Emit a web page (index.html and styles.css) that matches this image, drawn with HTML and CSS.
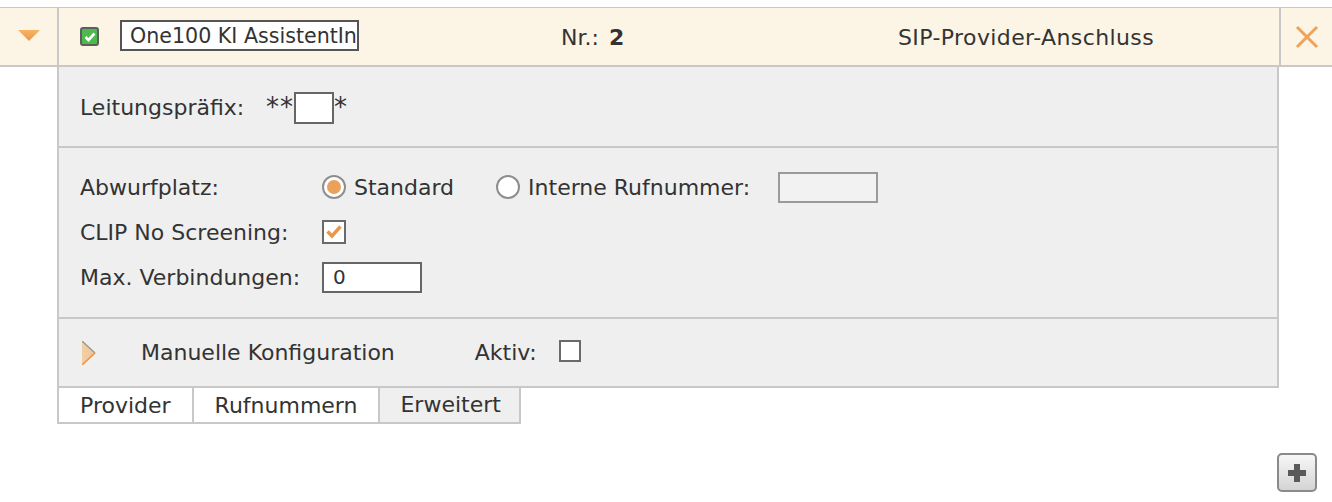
FILE: index.html
```html
<!DOCTYPE html>
<html lang="de">
<head>
    <meta charset="UTF-8">
    <title>SIP-Provider-Anschluss</title>
    <link rel="stylesheet" href="styles.css">
</head>
<body>

<div class="entry">
    <div class="entry-head">
        <div class="cell-toggle">
            <svg width="22" height="11" viewBox="0 0 22 11">
                <defs>
                    <linearGradient id="tri" x1="0" y1="0" x2="0" y2="1">
                        <stop offset="0" stop-color="#f7b563"/>
                        <stop offset="1" stop-color="#e9974c"/>
                    </linearGradient>
                </defs>
                <polygon points="0,0 22,0 11,11" fill="url(#tri)"/>
            </svg>
        </div>
        <div class="cell-main">
            <span class="check-green">
                <svg width="12" height="10" viewBox="0 0 12 10"><path d="M1.5 5 L4.5 8 L10.5 1.5" fill="none" stroke="#fff" stroke-width="2.6"/></svg>
            </span>
            <input class="name-input" type="text" value="One100 KI AssistentIn">
            <span class="nr">Nr.: <b>2</b></span>
            <span class="type">SIP-Provider-Anschluss</span>
        </div>
        <div class="cell-close">
            <svg width="24" height="24" viewBox="0 0 24 24"><path d="M2 2 L22 22 M22 2 L2 22" stroke="#f0a258" stroke-width="3"/></svg>
        </div>
    </div>

    <div class="panel">
        <div class="section section-prefix">
            <span class="label">Leitungspräfix:</span>
            <span class="prefix"><span class="stars">**</span><input class="box small" type="text"><span class="stars">*</span></span>
        </div>

        <div class="section section-options">
            <div class="row">
                <span class="label wide">Abwurfplatz:</span>
                <label class="radio first"><span class="dot on"></span>Standard</label>
                <label class="radio second"><span class="dot"></span>Interne Rufnummer:</label>
                <input class="box number disabled" type="text">
            </div>
            <div class="row">
                <span class="label wide">CLIP No Screening:</span>
                <span class="check-orange">
                    <svg width="16" height="14" viewBox="0 0 16 14"><path d="M1.5 6.5 L6 11 L14.5 1.5" fill="none" stroke="#e9974c" stroke-width="3.4"/></svg>
                </span>
            </div>
            <div class="row">
                <span class="label wide">Max. Verbindungen:</span>
                <input class="box number" type="text" value="0">
            </div>
        </div>

        <div class="section section-manual">
            <svg class="arrow-right" width="14" height="24" viewBox="0 0 14 24">
                <defs>
                    <linearGradient id="tri2" x1="0" y1="0" x2="1" y2="0">
                        <stop offset="0" stop-color="#f2cfa6"/>
                        <stop offset="1" stop-color="#eec49a"/>
                    </linearGradient>
                </defs>
                <polygon points="0,0 13,12 0,24" fill="url(#tri2)"/>
                <path d="M0 0 L13 12" stroke="#999" stroke-width="1.4"/>
                <path d="M13 12 L0 24" stroke="#f0933e" stroke-width="1.6"/>
            </svg>
            <span class="manual-label">Manuelle Konfiguration</span>
            <span class="aktiv">Aktiv:</span>
            <span class="check-empty"></span>
        </div>
    </div>

    <div class="tabs">
        <div class="tab">Provider</div>
        <div class="tab">Rufnummern</div>
        <div class="tab active">Erweitert</div>
    </div>
</div>

<div class="actions">
    <button class="add-btn">
        <svg width="20" height="20" viewBox="0 0 20 20"><path d="M7 1 H13 V7 H19 V13 H13 V19 H7 V13 H1 V7 H7 Z" fill="#5a5a5a"/></svg>
    </button>
</div>

</body>
</html>
```

FILE: styles.css
```css
body {
    margin: 0;
    font-family: "DejaVu Sans", Verdana, sans-serif;
    font-size: 22px;
    color: #333;
    background-color: #fff;
}
.entry {
    padding-top: 7px;
}
.entry-head {
    display: flex;
    height: 57px;
    background-color: #fcf5e6;
    border-top: 1px solid #c8c8c8;
    border-bottom: 2px solid #c8c8c8;
}
.cell-toggle {
    width: 57px;
    display: flex;
    align-items: center;
    justify-content: center;
    border-right: 2px solid #c8c8c8;
    padding-bottom: 2px;
}
.cell-main {
    width: 1220px;
    display: flex;
    align-items: center;
    padding-left: 21px;
    padding-top: 2px;
    box-sizing: border-box;
}
.check-green {
    width: 15px;
    height: 15px;
    background-color: #4cba4c;
    border: 2px solid #5e5e5e;
    border-radius: 3px;
    display: flex;
    align-items: center;
    justify-content: center;
    margin-right: 21px;
    margin-bottom: 2px;
}
.name-input {
    width: 239px;
    height: 31px;
    box-sizing: border-box;
    border: 2px solid #555;
    padding: 0 0 0 8px;
    margin-bottom: 4px;
    font-family: inherit;
    font-size: 20.6px;
    color: #333;
    background-color: #fff;
}
.nr {
    margin-left: 202px;
    width: 337px;
}
.nr b {
    margin-left: 3px;
}
.type {
    letter-spacing: 0.4px;
}
.cell-close {
    width: 51px;
    border-left: 2px solid #c8c8c8;
    display: flex;
    align-items: center;
    justify-content: center;
}
.panel {
    margin-left: 57px;
    width: 1222px;
    box-sizing: border-box;
    background-color: #efefef;
    border-left: 2px solid #c8c8c8;
    border-right: 2px solid #c8c8c8;
    border-bottom: 2px solid #c8c8c8;
}
.section {
    padding-left: 21px;
    border-bottom: 2px solid #c8c8c8;
}
.section:last-child {
    border-bottom: none;
}
.section-prefix {
    height: 81px;
    display: flex;
    align-items: center;
    padding-top: 2px;
    box-sizing: border-box;
}
.section-prefix .label {
    width: 186px;
}
.prefix {
    display: flex;
    align-items: center;
}
.stars {
    font-size: 26px;
    letter-spacing: 1px;
    margin-bottom: 2px;
}
.box {
    box-sizing: border-box;
    background-color: #fff;
    border: 2px solid #666;
    font-family: inherit;
    font-size: 20px;
    color: #333;
    padding: 0 9px;
}
.box.small {
    width: 40px;
    height: 32px;
}
.box.number {
    width: 100px;
    height: 31px;
}
.box.disabled {
    background-color: #f2f2f2;
    border-color: #9a9a9a;
}
.section-options {
    height: 171px;
    padding-top: 23px;
    box-sizing: border-box;
}
.row {
    display: flex;
    align-items: center;
    height: 32px;
    margin-bottom: 13px;
}
.label.wide {
    width: 242px;
}
.radio {
    display: flex;
    align-items: center;
}
.radio.first {
    margin-right: 42px;
}
.radio.second {
    margin-right: 28px;
}
.dot {
    width: 20px;
    height: 20px;
    border: 2px solid #8e8e8e;
    border-radius: 50%;
    background-color: #fff;
    margin-right: 8px;
    position: relative;
}
.dot.on::after {
    content: "";
    position: absolute;
    left: 3px;
    top: 3px;
    width: 14px;
    height: 14px;
    border-radius: 50%;
    background-color: #eba15b;
}
.check-orange {
    width: 20px;
    height: 20px;
    border: 2px solid #6a6a6a;
    background-color: #fff;
    display: flex;
    align-items: center;
    justify-content: center;
}
.section-manual {
    height: 67px;
    display: flex;
    align-items: center;
    padding-left: 23px;
}
.arrow-right {
    margin-right: 45px;
}
.manual-label {
    margin-right: 80px;
}
.aktiv {
    margin-right: 22px;
}
.check-empty {
    width: 18px;
    height: 18px;
    border: 2px solid #6a6a6a;
    background-color: #fff;
    margin-bottom: 4px;
}
.tabs {
    display: flex;
    margin-left: 57px;
}
.tab {
    height: 36px;
    box-sizing: border-box;
    padding: 0 21px;
    display: flex;
    align-items: center;
    background-color: #fff;
    border: 2px solid #c8c8c8;
    border-top: none;
    border-right: none;
}
.tab:last-child {
    border-right: 2px solid #c8c8c8;
    padding: 0 18px 1px 20px;
}
.tab.active {
    background-color: #efefef;
}
.actions {
    display: flex;
    justify-content: flex-end;
    padding-right: 15px;
    padding-top: 29px;
}
.add-btn {
    width: 40px;
    height: 39px;
    border: 2px solid #8a8a8a;
    border-radius: 5px;
    background: linear-gradient(#f7f7f7, #d4d4d4);
    display: flex;
    align-items: center;
    justify-content: center;
    padding: 0;
}
```
